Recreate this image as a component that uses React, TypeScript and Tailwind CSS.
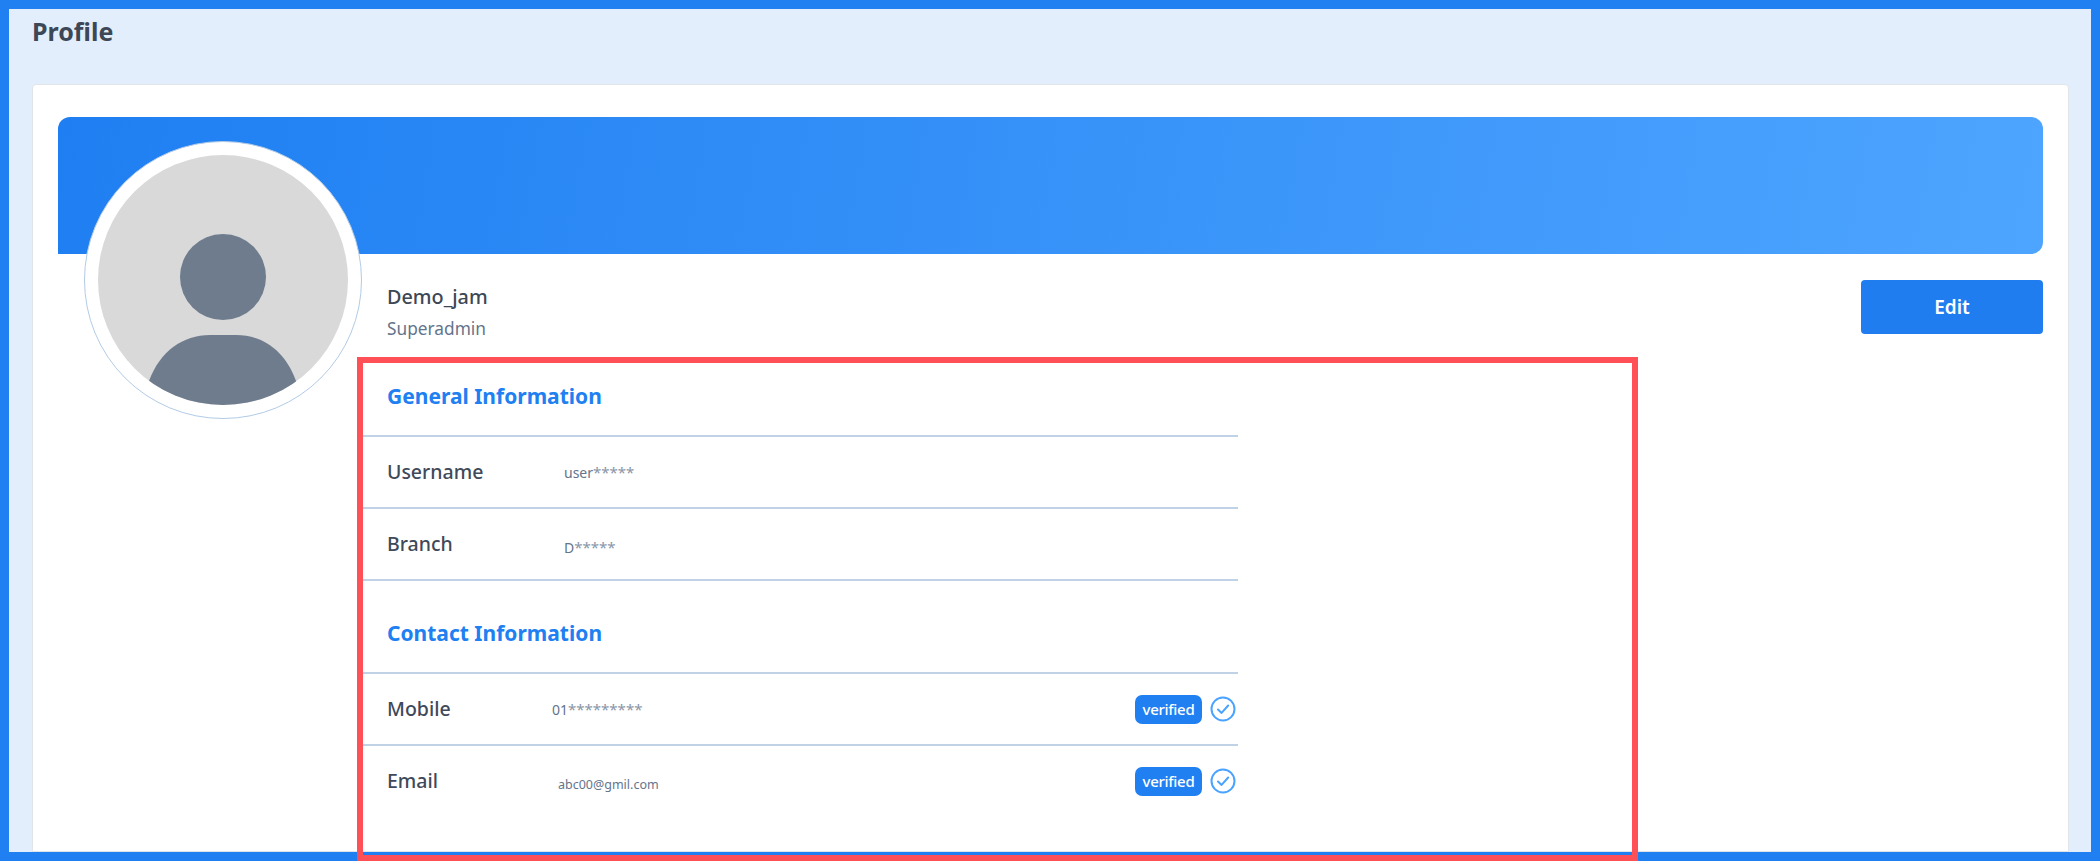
const VerifiedIcon = () => (
  <svg width="26" height="26" viewBox="0 0 26 26" fill="none" className="text-[#4aa3ff]">
    <circle cx="13" cy="13" r="11.5" stroke="currentColor" strokeWidth="2" />
    <path d="M8 13.5l3.6 3.4L18.2 9.5" stroke="currentColor" strokeWidth="2" strokeLinecap="round" strokeLinejoin="round" />
  </svg>
);

const InfoRow = ({
  label,
  value,
  mask,
  valueClass,
  verified,
}: {
  label: string;
  value: string;
  mask?: string;
  valueClass: string;
  verified?: boolean;
}) => (
  <div className="flex h-[72px] items-center border-t-2 border-[#c0d3e6] pl-[25px] pr-[2px]">
    <span className="w-[165px] text-[19.5px] font-medium text-[#3f4959]">{label}</span>
    <span className={`text-[#64748b] ${valueClass}`}>
      {value}
      {mask && <span className="text-[15px] text-[#8a96a8]">{mask}</span>}
    </span>
    {verified && (
      <div className="ml-auto flex items-center gap-[8px]">
        <span className="flex h-[29px] w-[67px] items-center justify-center rounded-[7px] bg-[#2080f2] text-[15px] font-medium tracking-[-0.3px] text-white">
          verified
        </span>
        <VerifiedIcon />
      </div>
    )}
  </div>
);

const App = () => {
  return (
    <div className="relative flex h-[861px] flex-col border-[9px] border-[#2080f2] bg-[#e2eefc] pl-[23px] pr-[22px] font-['Noto_Sans',sans-serif]">
      <h1 className="h-[75px] pt-[6px] text-[25px] font-bold leading-8 text-[#3d4755]">Profile</h1>

      <div className="grow rounded-t border border-[#e1e5ea] bg-white px-[25px] pt-[32px]">
        {/* Banner */}
        <div className="h-[137px] rounded-t-xl rounded-br-xl bg-[linear-gradient(100deg,#1f7ff2,#4ea5ff)]" />

        <div className="flex items-start">
          {/* Avatar */}
          <div className="relative ml-[26px] mt-[-113px] h-[278px] w-[278px] shrink-0 rounded-full border border-[#b2cbe6] bg-white p-[13px]">
            <div className="h-full w-full overflow-hidden rounded-full bg-[#d9d9d9]">
              <svg viewBox="0 0 250 250" className="h-full w-full">
                <circle cx="125" cy="122" r="43" fill="#6e7c8e" />
                <path d="M45 250 L51 226 C 62 196 85 180 112 180 L138 180 C 165 180 187 196 198 226 L204 250 Z" fill="#6e7c8e" />
              </svg>
            </div>
          </div>

          {/* Details */}
          <div className="w-[876px] shrink-0 pt-[29px]">
            <div className="pl-[25px]">
              <p className="text-[19.8px] font-medium leading-7 text-[#3d4755]">Demo_jam</p>
              <p className="mt-[6px] text-[17.3px] leading-6 text-[#64748b]">Superadmin</p>
            </div>

            <h2 className="mt-[40px] pb-[24px] pl-[25px] text-[21px] font-bold leading-[30px] text-[#2080f2]">
              General Information
            </h2>
            <InfoRow label="Username" value="user" mask="*****" valueClass="ml-3 text-[14px]" />
            <InfoRow label="Branch" value="D" mask="*****" valueClass="ml-3 mt-[6px] text-[14px]" />

            <div className="border-t-2 border-[#c0d3e6]">
              <h2 className="pb-[24px] pl-[25px] pt-[37px] text-[21px] font-bold leading-[30px] text-[#2080f2]">
                Contact Information
              </h2>
            </div>
            <InfoRow label="Mobile" value="01" mask="*********" valueClass="text-[14px]" verified />
            <InfoRow label="Email" value="abc00@gmil.com" valueClass="ml-[6px] mt-[8px] text-[12.5px]" verified />
          </div>

          <button className="ml-auto mt-[26px] h-[54px] w-[182px] rounded bg-[#1f7df0] text-[19px] font-semibold text-white">
            Edit
          </button>
        </div>
      </div>

      {/* Red highlight drawn over the page */}
      <div className="pointer-events-none absolute left-[348px] top-[348px] h-[504px] w-[1281px] border-[6px] border-[#ff4f57]" />
    </div>
  );
};

export default App;
